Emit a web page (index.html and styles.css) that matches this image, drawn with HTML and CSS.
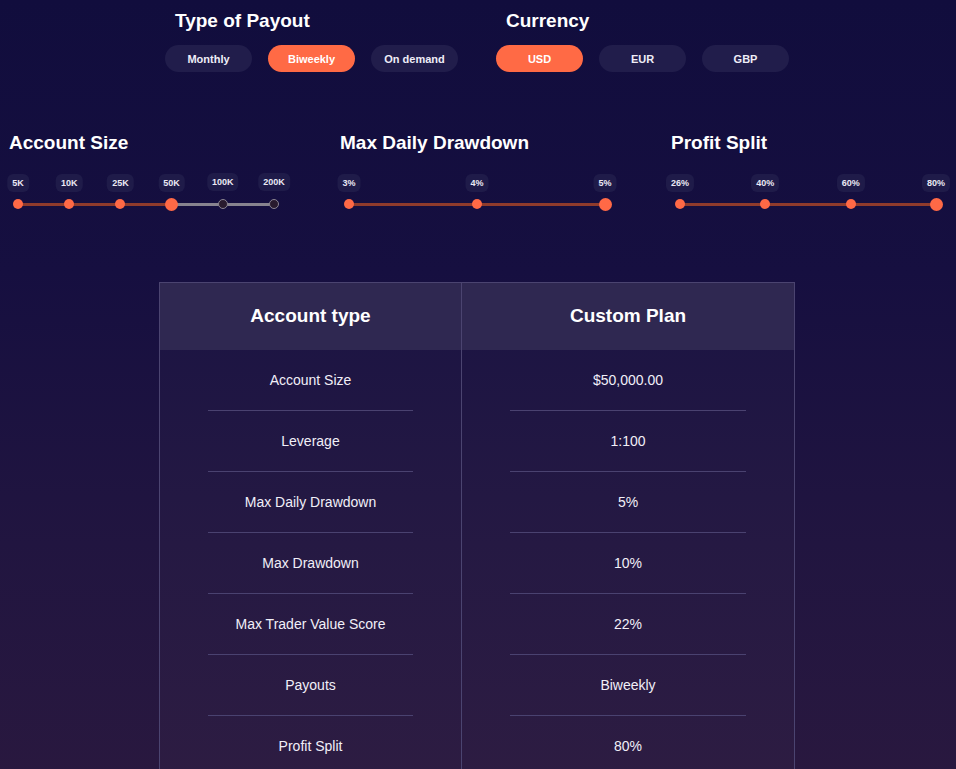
FILE: index.html
```html
<!DOCTYPE html>
<html lang="en">
<head>
<meta charset="utf-8">
<title>Custom Plan</title>
<link rel="stylesheet" href="styles.css">
</head>
<body>
<section class="choices">
  <div class="group">
    <h2 class="group-title">Type of Payout</h2>
    <div class="options">
      <span class="opt">Monthly</span>
      <span class="opt active">Biweekly</span>
      <span class="opt">On demand</span>
    </div>
  </div>
  <div class="group">
    <h2 class="group-title">Currency</h2>
    <div class="options">
      <span class="opt active">USD</span>
      <span class="opt">EUR</span>
      <span class="opt">GBP</span>
    </div>
  </div>
</section>

<section class="sliders">
  <div class="slider">
    <h2 class="slider-title">Account Size</h2>
    <div class="track">
      <div class="rail"></div>
      <div class="fill" style="width:60%"></div>
      <span class="pill" style="left:0%">5K</span>
      <span class="pill" style="left:20%">10K</span>
      <span class="pill" style="left:40%">25K</span>
      <span class="pill" style="left:60%">50K</span>
      <span class="pill raised" style="left:80%">100K</span>
      <span class="pill raised" style="left:100%">200K</span>
      <span class="dot" style="left:0%"></span>
      <span class="dot" style="left:20%"></span>
      <span class="dot" style="left:40%"></span>
      <span class="dot current" style="left:60%"></span>
      <span class="dot off" style="left:80%"></span>
      <span class="dot off" style="left:100%"></span>
    </div>
  </div>
  <div class="slider">
    <h2 class="slider-title">Max Daily Drawdown</h2>
    <div class="track">
      <div class="rail"></div>
      <div class="fill" style="width:100%"></div>
      <span class="pill" style="left:0%">3%</span>
      <span class="pill" style="left:50%">4%</span>
      <span class="pill" style="left:100%">5%</span>
      <span class="dot" style="left:0%"></span>
      <span class="dot" style="left:50%"></span>
      <span class="dot current" style="left:100%"></span>
    </div>
  </div>
  <div class="slider">
    <h2 class="slider-title">Profit Split</h2>
    <div class="track">
      <div class="rail"></div>
      <div class="fill" style="width:100%"></div>
      <span class="pill" style="left:0%">26%</span>
      <span class="pill" style="left:33.333%">40%</span>
      <span class="pill" style="left:66.667%">60%</span>
      <span class="pill" style="left:100%">80%</span>
      <span class="dot" style="left:0%"></span>
      <span class="dot" style="left:33.333%"></span>
      <span class="dot" style="left:66.667%"></span>
      <span class="dot current" style="left:100%"></span>
    </div>
  </div>
</section>

<section class="plan">
  <div class="cell head left">Account type</div>
  <div class="cell head">Custom Plan</div>

  <div class="cell left"><div class="inner">Account Size</div></div>
  <div class="cell"><div class="inner">$50,000.00</div></div>

  <div class="cell left"><div class="inner">Leverage</div></div>
  <div class="cell"><div class="inner">1:100</div></div>

  <div class="cell left"><div class="inner">Max Daily Drawdown</div></div>
  <div class="cell"><div class="inner">5%</div></div>

  <div class="cell left"><div class="inner">Max Drawdown</div></div>
  <div class="cell"><div class="inner">10%</div></div>

  <div class="cell left"><div class="inner">Max Trader Value Score</div></div>
  <div class="cell"><div class="inner">22%</div></div>

  <div class="cell left"><div class="inner">Payouts</div></div>
  <div class="cell"><div class="inner">Biweekly</div></div>

  <div class="cell left"><div class="inner last">Profit Split</div></div>
  <div class="cell"><div class="inner last">80%</div></div>
</section>
</body>
</html>
```

FILE: styles.css
```css
html, body {
  margin: 0;
  padding: 0;
}

body {
  min-height: 769px;
  overflow-x: hidden;
  background: linear-gradient(180deg, #110d3d 0%, #160f40 35%, #211540 70%, #29183f 100%);
  color: #ffffff;
  font-family: "Liberation Sans", Arial, sans-serif;
}

/* ---------- top choices ---------- */
.choices {
  display: flex;
  justify-content: center;
  gap: 38px;
  padding-top: 9px;
  padding-right: 2px;
}

.group-title {
  margin: 0 0 12px 10px;
  font-size: 19px;
  line-height: 24px;
  font-weight: 700;
}

.options {
  display: flex;
  gap: 16px;
}

.opt {
  width: 87px;
  height: 27px;
  border-radius: 14px;
  background: #211d4b;
  color: #efedf7;
  font-size: 11px;
  font-weight: 700;
  display: flex;
  align-items: center;
  justify-content: center;
}

.opt.active {
  background: #ff6a45;
  color: #ffffff;
}

/* ---------- sliders ---------- */
.sliders {
  display: grid;
  grid-template-columns: 300px 300px 1fr;
  column-gap: 31px;
  padding-left: 9px;
  margin-top: 59px;
}

.slider-title {
  margin: 0 0 19px 0;
  font-size: 19px;
  line-height: 24px;
  font-weight: 700;
}

.track {
  position: relative;
  width: 256px;
  height: 37px;
  margin-left: 9px;
}

.rail,
.fill {
  position: absolute;
  left: 0;
  top: 29px;
  height: 3px;
}

.rail {
  right: 0;
  background: #87838f;
}

.fill {
  background: #8f3b2c;
}

.pill {
  position: absolute;
  top: 0;
  transform: translateX(-50%);
  height: 18px;
  line-height: 18px;
  padding: 0 5px;
  border-radius: 6px;
  background: #1f1b49;
  color: #ebe9f4;
  font-size: 9px;
  font-weight: 700;
  white-space: nowrap;
}

.pill.raised {
  top: -1px;
}

.dot {
  position: absolute;
  top: 30px;
  width: 10px;
  height: 10px;
  margin: -5px 0 0 -5px;
  border-radius: 50%;
  background: #ff6946;
}

.dot.current {
  width: 13px;
  height: 13px;
  margin: -6.5px 0 0 -6.5px;
}

.dot.off {
  box-sizing: border-box;
  background: #291b2e;
  border: 1px solid #8a8491;
}

/* ---------- plan table ---------- */
.plan {
  box-sizing: border-box;
  display: grid;
  grid-template-columns: 302px 1fr;
  width: 636px;
  margin: 71px 0 0 159px;
  border: 1px solid #4b4470;
  border-bottom: 0;
  background: rgba(255, 255, 255, 0.02);
}

.cell {
  padding: 0 48px;
  text-align: center;
}

.cell.left {
  border-right: 1px solid #4b4470;
}

.cell.head {
  height: 66px;
  padding-bottom: 1px;
  display: flex;
  align-items: center;
  justify-content: center;
  background: #2f2851;
  font-size: 19px;
  font-weight: 700;
}

.inner {
  height: 60px;
  padding-bottom: 1px;
  box-sizing: border-box;
  display: flex;
  align-items: center;
  justify-content: center;
  border-bottom: 1px solid #4a4270;
  font-size: 14px;
  color: #f1eff8;
}

.inner:not(.last) {
  height: 61px;
}

.inner.last {
  border-bottom: 0;
}
```
